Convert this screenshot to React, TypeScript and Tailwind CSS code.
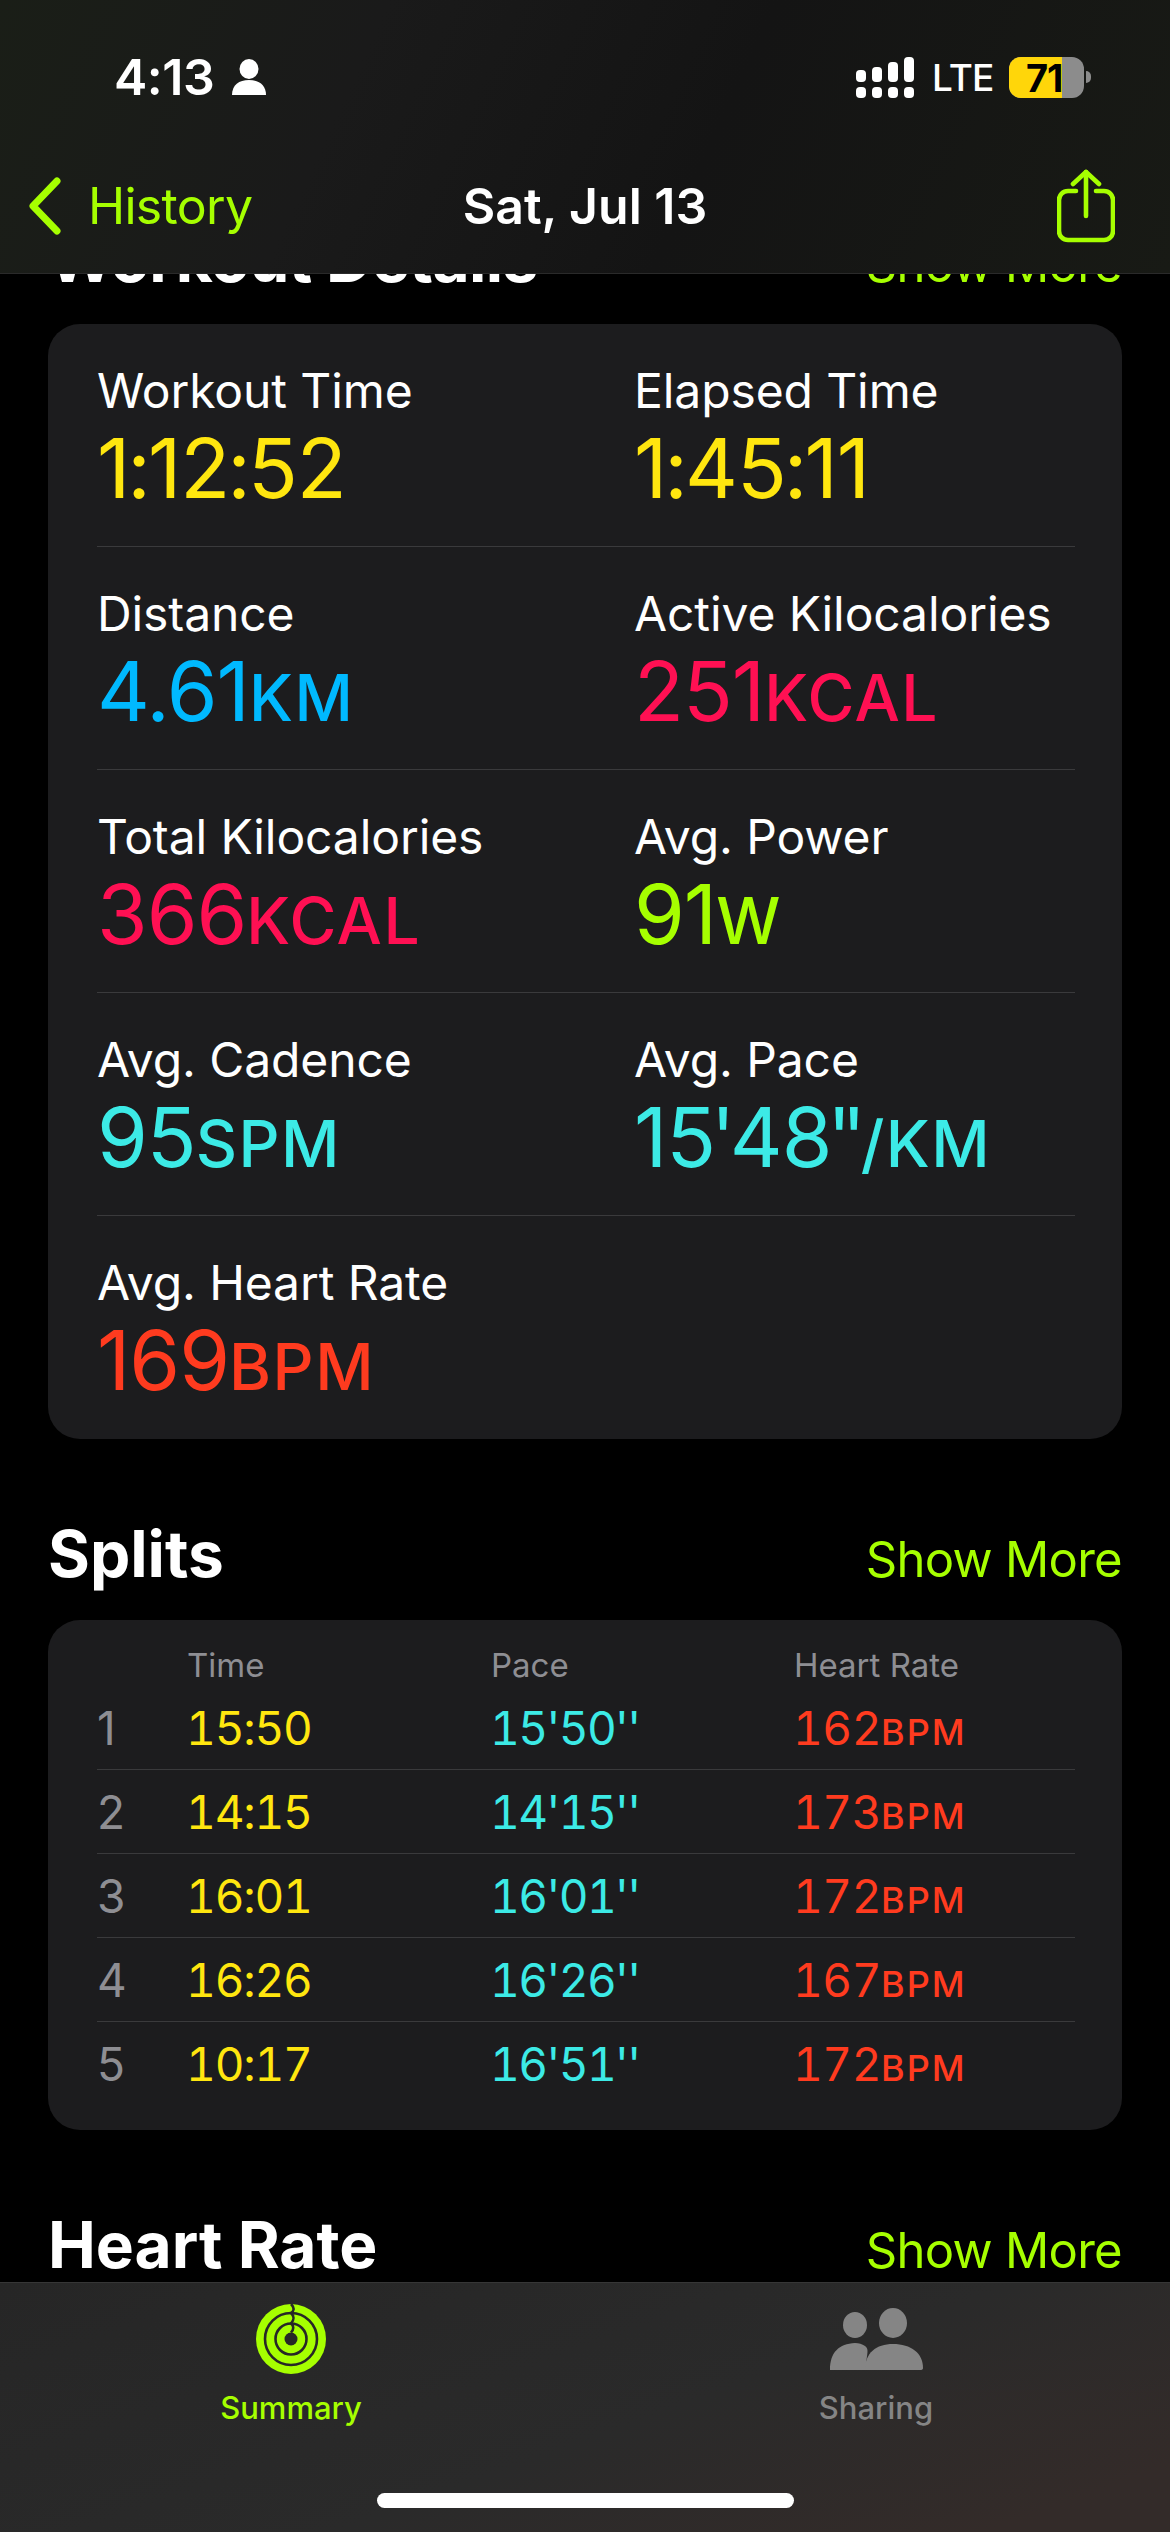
import React from "react";

const Y = "text-[#ffe60f]";
const B = "text-[#00b9ff]";
const P = "text-[#ff1053]";
const G = "text-[#a6ff00]";
const C = "text-[#3ceae6]";
const R = "text-[#ff3b1f]";

function Digits({ value }: { value: string }) {
  return (
    <span className="text-[82px] tracking-[-1px]">
      {value.split(/([:'])/).map((part, i) =>
        part === ":" ? (
          <span key={i} className="-mx-[2px]">
            {part}
          </span>
        ) : part === "'" ? (
          <span key={i} className="-mx-[4.5px]">
            {part}
          </span>
        ) : (
          <span key={i}>{part}</span>
        ),
      )}
    </span>
  );
}

function Metric({ label, value, unit, color }: { label: string; value: string; unit?: string; color: string }) {
  return (
    <div className="h-[222px] pt-[38px]">
      <div className="text-[48px] leading-[58px] text-white tracking-[-0.1px]">{label}</div>
      <div className={`mt-[3px] flex items-baseline leading-[92px] ${color}`}>
        <Digits value={value} />
        {unit && <span className="text-[64px] font-medium tracking-[1.5px]">{unit}</span>}
      </div>
    </div>
  );
}

function SectionHead({ title, className, titleClass }: { title: string; className?: string; titleClass?: string }) {
  return (
    <div className={`flex items-baseline justify-between px-[48px] ${className ?? ""}`}>
      <span className={`text-[64px] leading-[78px] font-bold text-white ${titleClass ?? ""}`}>{title}</span>
      <span className="text-[49px] leading-none text-[#a6ff00] tracking-[-0.7px]">Show More</span>
    </div>
  );
}

const splits = [
  ["1", "15:50", "15'50''", "162"],
  ["2", "14:15", "14'15''", "173"],
  ["3", "16:01", "16'01''", "172"],
  ["4", "16:26", "16'26''", "167"],
  ["5", "10:17", "16'51''", "172"],
];

function Rings() {
  return (
    <svg width="70" height="70" viewBox="0 0 70 70" fill="none">
      <circle cx="35" cy="35" r="35" fill="#a6ff00" />
      <circle cx="35" cy="35" r="26" stroke="#272727" strokeWidth="2.6" />
      <circle cx="35" cy="35" r="15.5" stroke="#272727" strokeWidth="2.6" />
      <circle cx="35" cy="35" r="6.5" fill="#272727" />
      <path d="M35 0 C39 4 38 7 35 9 C39 13 38 16 35 19.5 C38 22 38 25 35 28.5" stroke="#272727" strokeWidth="2.6" />
    </svg>
  );
}

export default function App() {
  return (
    <div
      className="flex h-[2532px] w-[1170px] flex-col overflow-hidden bg-black text-white"
      style={{ fontFamily: "Inter, 'Liberation Sans', sans-serif" }}
    >
      <header className="relative z-10 h-[274px] shrink-0 border-b border-[#2a2a2a] bg-[linear-gradient(115deg,#1a1e17_0%,#1a1a1a_30%,#141414_60%,#181a15_100%)]">
        <div className="flex h-[128px] items-center pt-[26px]">
          <div className="ml-[114px] flex items-center gap-[18px]">
            <span className="text-[50px] font-semibold leading-none tracking-[-0.5px]">4:13</span>
            <svg width="34" height="36" viewBox="0 0 34 36" fill="white">
              <ellipse cx="17" cy="10" rx="9.5" ry="10" />
              <path d="M0 36 C0 26 7 21 17 21 C27 21 34 26 34 36 Z" />
            </svg>
          </div>
          <div className="ml-auto mr-[79px] flex items-center">
            <svg width="58" height="41" viewBox="0 0 58 41" fill="white">
              <rect x="0" y="13" width="10" height="12" rx="4" />
              <rect x="16" y="10" width="10" height="15" rx="4" />
              <rect x="32" y="5" width="10" height="20" rx="4" />
              <rect x="48" y="0" width="10" height="25" rx="4" />
              <rect x="0" y="30" width="10" height="11" rx="4" />
              <rect x="16" y="30" width="10" height="11" rx="4" />
              <rect x="32" y="30" width="10" height="11" rx="4" />
              <rect x="48" y="30" width="10" height="11" rx="4" />
            </svg>
            <span className="ml-[18px] w-[59px] text-[37px] font-medium leading-none tracking-[-0.8px]">LTE</span>
            <div className="relative ml-[18px] h-[41px] w-[75px] overflow-hidden rounded-[12px] bg-[#8c8c8c]">
              <div className="h-full w-[53px] bg-[#ffd60a]" />
              <span className="absolute left-[17px] top-[1px] text-[38px] font-bold leading-[40px] tracking-[-1px] text-black">71</span>
            </div>
            <div className="ml-[2px] h-[12px] w-[5px] rounded-r-full bg-[#8c8c8c]" />
          </div>
        </div>
        <div className="relative mt-[18px] flex h-[120px] items-center">
          <svg className="ml-[28px]" width="34" height="58" viewBox="0 0 34 58" fill="none">
            <path d="M29 4 L5 29 L29 54" stroke="#a6ff00" strokeWidth="7" strokeLinecap="round" strokeLinejoin="round" />
          </svg>
          <span className="ml-[26px] text-[50px] leading-none tracking-[-0.7px] text-[#a6ff00]">History</span>
          <span className="absolute left-0 right-0 text-center text-[50px] font-semibold leading-none">Sat, Jul 13</span>
          <svg className="ml-auto mr-[55px]" width="58" height="74" viewBox="0 0 58 74" fill="none" stroke="#a6ff00" strokeWidth="4.6" strokeLinecap="round" strokeLinejoin="round">
            <path d="M19 22 H11 a9 9 0 0 0 -9 9 V62 a9 9 0 0 0 9 9 H47 a9 9 0 0 0 9 -9 V31 a9 9 0 0 0 -9 -9 H39" />
            <path d="M29 47 V3" />
            <path d="M16 15 L29 3 L42 15" />
          </svg>
        </div>
      </header>

      <main className="min-h-0 flex-1">
        <SectionHead title="Workout Details" className="-mt-[54px]" titleClass="tracking-[-0.6px]" />
        <section className="mx-[48px] mt-[26px] h-[1115px] rounded-[32px] bg-[#1c1c1e] pl-[49px] pr-[47px]">
          <div className="grid grid-cols-[537px_1fr] border-b border-[#3a3a3c]">
            <Metric label="Workout Time" value="1:12:52" color={Y} />
            <Metric label="Elapsed Time" value="1:45:11" color={Y} />
          </div>
          <div className="grid grid-cols-[537px_1fr] border-b border-[#3a3a3c]">
            <Metric label="Distance" value="4.61" unit="KM" color={B} />
            <Metric label="Active Kilocalories" value="251" unit="KCAL" color={P} />
          </div>
          <div className="grid grid-cols-[537px_1fr] border-b border-[#3a3a3c]">
            <Metric label="Total Kilocalories" value="366" unit="KCAL" color={P} />
            <Metric label="Avg. Power" value="91" unit="W" color={G} />
          </div>
          <div className="grid grid-cols-[537px_1fr] border-b border-[#3a3a3c]">
            <Metric label="Avg. Cadence" value="95" unit="SPM" color={C} />
            <Metric label="Avg. Pace" value="15'48''" unit="/KM" color={C} />
          </div>
          <Metric label="Avg. Heart Rate" value="169" unit="BPM" color={R} />
        </section>

        <SectionHead title="Splits" className="mt-[76px]" />
        <section className="mx-[48px] mt-[27px] h-[510px] rounded-[32px] bg-[#1c1c1e] pl-[49px] pr-[47px] pt-[21px]">
          <div className="grid h-[45px] grid-cols-[90px_304px_303px_1fr] items-center text-[33px] text-[#8e8e93]">
            <span />
            <span>Time</span>
            <span>Pace</span>
            <span>Heart Rate</span>
          </div>
          {splits.map((s, i) => (
            <div
              key={s[0]}
              className={`grid h-[84px] grid-cols-[90px_304px_303px_1fr] items-baseline pt-[8px] ${i < 4 ? "border-b border-[#3a3a3c]" : ""}`}
            >
              <span className="text-[46px] text-[#8e8e93]">{s[0]}</span>
              <span className={`-ml-[1px] text-[46px] tracking-[-1.2px] tabular-nums ${Y}`}>{s[1]}</span>
              <span className={`-ml-[1px] text-[46px] tracking-[-1.6px] tabular-nums ${C}`}>{s[2]}</span>
              <span className={`-ml-[1px] ${R}`}>
                <span className="text-[46px] tracking-[-0.5px] tabular-nums">{s[3]}</span>
                <span className="text-[36px] font-medium tracking-[2px]">BPM</span>
              </span>
            </div>
          ))}
        </section>

        <SectionHead title="Heart Rate" className="mt-[76px]" />
      </main>

      <nav className="relative h-[250px] shrink-0 border-t border-[#363636] bg-[linear-gradient(160deg,#262626_0%,#2a2a2a_55%,#332b29_90%)]">
        <div className="grid grid-cols-[582px_1fr] pt-[21px]">
          <div className="flex flex-col items-center">
            <Rings />
            <span className="mt-[15px] text-[31px] font-medium leading-[38px] text-[#a6ff00]">Summary</span>
          </div>
          <div className="flex flex-col items-center">
            <svg className="mt-[4px]" width="93" height="62" viewBox="0 0 93 62" fill="#858585">
              <ellipse cx="25" cy="17" rx="12" ry="13" />
              <ellipse cx="63" cy="15" rx="14" ry="15" />
              <path d="M0 62 C0 44 9 36 25 35 C29 35 32 36 35 38 C40 42 36 46 36 62 Z" />
              <path d="M35 62 C35 45 46 36 63 36 C81 36 93 45 93 60 Q93 62 90 62 Z" />
            </svg>
            <span className="mt-[19px] text-[31px] font-medium leading-[38px] text-[#858585]">Sharing</span>
          </div>
        </div>
        <div className="absolute bottom-[24px] left-[377px] h-[15px] w-[417px] rounded-full bg-white" />
      </nav>
    </div>
  );
}
